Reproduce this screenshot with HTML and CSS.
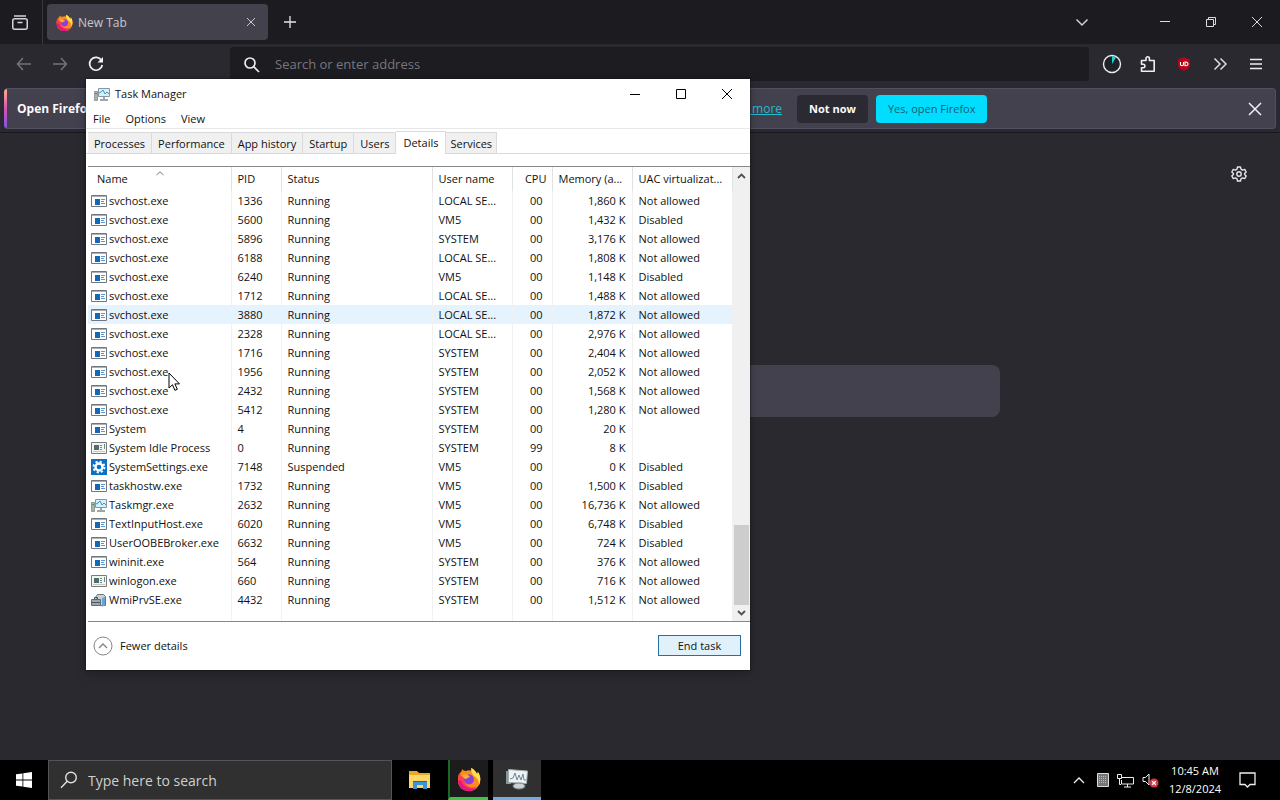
FILE: index.html
```html
<!DOCTYPE html>
<html lang="en">
<head>
<meta charset="utf-8">
<title>Desktop</title>
<link rel="stylesheet" href="styles.css">
</head>
<body>
<svg class="defs" aria-hidden="true">
  <symbol id="fox" viewBox="0 0 24 24">
    <path fill="#ff8a1e" d="M3 6c1-1 2-2 2-4 1 1 2 2 4 2 2-1 4-1 6 0 0-1 0-2-1-3 3 1 5 4 6 6 1-1 1-2 0-3 3 3 4 7 3 11-1 5-5 9-11 9S1 20 1 13c0-3 0-5 2-7z"/>
    <path fill="#ff3b4e" d="M3 6c-2 2-2 4-2 7 0 7 5 11 11 11 4 0 7-2 9-5-3 2-7 2-10 0-4-2-4-6-3-8L4 9z"/>
    <path fill="#e31587" d="M1 14c1 6 5 10 11 10 3 0 5-1 7-3-5 2-13 0-15-8z"/>
    <path fill="#ffe14d" d="M14 1c3 1 5 4 6 6 1-1 1-2 0-3 4 4 4 10 2 14 0-6-3-8-5-9-2-2-3-4-3-8z"/>
    <circle cx="12" cy="12.500" r="5" fill="#8a3fe0"/>
    <path fill="#ffb02e" d="M5 8c2-1 4-1 6 0l2 2c-2 1-3 1-4 2-2 0-3-2-4-4z"/>
  </symbol>
  <symbol id="app" viewBox="0 0 16 14">
    <path fill="#fff" stroke="#707780" d="M.5 1.500h15v11H.5z"/>
    <path fill="#a9b0b8" d="M1 2h14v1H1z"/>
    <path fill="#1468b8" d="M4 5h5v6H4z"/>
    <path stroke="#5797cf" d="M10 5.500h4M10 7.500h3M10 9.500h4"/>
  </symbol>
  <symbol id="sysapp" viewBox="0 0 16 14">
    <path fill="#f2f5f3" stroke="#777d7c" d="M.5 1.500h15v11H.5z"/>
    <path fill="#4f6f68" d="M3 4h5v5H3z"/>
    <path stroke="#6c8a82" d="M9 4.500h2M9 6.500h2M9 8.500h2M13.500 3v5"/>
    <path stroke="#c4cac8" d="M2 10.500h12"/>
  </symbol>
  <symbol id="gearbox" viewBox="0 0 16 16">
    <path fill="#0a72c6" d="M0 0h16v16H0z"/>
    <circle cx="8" cy="8" r="3.500" fill="none" stroke="#fff" stroke-width="2.400"/>
    <circle cx="8" cy="8" r="5.400" fill="none" stroke="#fff" stroke-width="2" stroke-dasharray="2.120 2.120"/>
  </symbol>
  <symbol id="taskmgr" viewBox="0 0 16 16">
    <path fill="#d9eef7" stroke="#8796a0" d="M4.500 2.500h11v8h-11z"/>
    <path fill="none" stroke="#2f9cc4" d="M5 7l2-1 2-2 2 4 2-2 2 2"/>
    <path fill="#9ba6ad" d="M9 11h2v2h3v2H6v-2h3z"/>
    <path fill="#aab4a8" stroke="#7f8d85" stroke-width=".8" d="M.5 5.500h3v9h-3z"/>
    <path stroke="#3c9a77" d="M1 7.500h2"/>
  </symbol>
  <symbol id="wmi" viewBox="0 0 16 16">
    <path fill="#c9d2d9" stroke="#68737c" d="M4.500 5.500l2-3h6l2 2v9h-5z"/>
    <path fill="#9ba7b1" stroke="#616c76" d="M.5 7.500h9v6h-9z"/>
    <path fill="none" stroke="#4b5761" d="M1 10.500h8M3.500 7V5.500h3V7"/>
    <path fill="#6fa3cf" d="M11 6l3-1v8l-3 2z"/>
  </symbol>
</svg>

<div class="desktop">
  <main class="browser">
    <header class="tabstrip">
      <button class="ic view" aria-label="Firefox View"><svg width="18" height="18" viewBox="0 0 18 18" fill="none" stroke="#d5d4dc" stroke-width="1.500"><rect x="1.750" y="5.750" width="14.500" height="10.500" rx="2"/><path d="M3 3h12M6.500 9.500h5"/></svg></button>
      <div class="tab"><svg width="17" height="17"><use href="#fox"/></svg><span>New Tab</span>
        <button class="ic close" aria-label="Close tab"><svg width="10" height="10" viewBox="0 0 10 10" stroke="#c9c8d0"><path d="M1 1l8 8M9 1L1 9"/></svg></button></div>
      <button class="ic plus" aria-label="New tab"><svg width="14" height="14" viewBox="0 0 14 14" stroke="#e6e5ec" stroke-width="1.300"><path d="M7 1v12M1 7h12"/></svg></button>
      <span class="grow"></span>
      <button class="ic alltabs" aria-label="List all tabs"><svg width="14" height="14" viewBox="0 0 14 14" fill="none" stroke="#d0cfd7" stroke-width="1.500"><path d="M1.500 4.500L7 10l5.500-5.500"/></svg></button>
      <button class="ic wc" aria-label="Minimize"><svg width="12" height="12" viewBox="0 0 12 12" stroke="#ddd"><path d="M1 5.500h10"/></svg></button>
      <button class="ic wc" aria-label="Restore"><svg width="12" height="12" viewBox="0 0 12 12" fill="none" stroke="#ddd"><path d="M1.500 3.500h7v7h-7zM3.500 3V1.500h7v7H9"/></svg></button>
      <button class="ic wc" aria-label="Close"><svg width="12" height="12" viewBox="0 0 12 12" stroke="#ddd"><path d="M1 1l10 10M11 1L1 11"/></svg></button>
    </header>
    <nav class="toolbar">
      <div class="navs">
        <button class="ic" aria-label="Back"><svg width="16" height="16" viewBox="0 0 16 16" fill="none" stroke="#74737c" stroke-width="1.500"><path d="M15 8H1.500M7 2L1.500 8 7 14"/></svg></button>
        <button class="ic" aria-label="Forward"><svg width="16" height="16" viewBox="0 0 16 16" fill="none" stroke="#74737c" stroke-width="1.500"><path d="M1 8h13.500M9 2l5.500 6L9 14"/></svg></button>
        <button class="ic" aria-label="Reload"><svg width="16" height="16" viewBox="0 0 16 16" fill="none" stroke="#f3f3f6" stroke-width="1.700"><path d="M13.500 4.500A6.400 6.400 0 1 0 14.300 9"/><path d="M15 1v5.500H9.500z" fill="#f3f3f6" stroke="none"/></svg></button>
      </div>
      <label class="urlbar"><svg width="17" height="17" viewBox="0 0 17 17" fill="none" stroke="#ecebf1" stroke-width="1.700"><circle cx="7" cy="7" r="5"/><path d="M10.700 10.700L16 16"/></svg><input type="text" placeholder="Search or enter address" aria-label="Address"></label>
      <div class="tools">
        <button class="ic" aria-label="Tab timer"><svg width="20" height="20" viewBox="0 0 20 20"><circle cx="10" cy="10" r="8.500" fill="#1d2327" stroke="#eee" stroke-width="1.400"/><path d="M10 10V2a8 8 0 0 1 4 1.500z" fill="#1fd0cf"/></svg></button>
        <button class="ic" aria-label="Extensions"><svg width="18" height="18" viewBox="0 0 18 18" fill="none" stroke="#efeef4" stroke-width="1.600" stroke-linejoin="round"><path d="M2.500 5.500H7V3.500a1.700 1.700 0 0 1 3.400 0v2h4.800v10.700H2.500v-3.500h1.700a1.600 1.600 0 0 0 0-3.400H2.500z"/></svg></button>
        <button class="ic" aria-label="uBlock"><svg width="14" height="14" viewBox="0 0 14 14"><path fill="#b5051c" d="M7 0l6 2.500V8c0 3-3 5-6 6-3-1-6-3-6-6V2.500z"/><path fill="none" stroke="#fff" stroke-width="1.100" d="M3.500 5v2.500q0 1.200 1.500 1.200T6.500 7.500V5M8 5v3.700h1q2 0 2-1.800T9 5z"/></svg></button>
        <button class="ic" aria-label="More tools"><svg width="14" height="14" viewBox="0 0 14 14" fill="none" stroke="#ddd" stroke-width="1.500"><path d="M1.500 1.500L7 7l-5.500 5.500M7.500 1.500L13 7l-5.500 5.500"/></svg></button>
        <button class="ic" aria-label="Menu"><svg width="14" height="14" viewBox="0 0 14 14" stroke="#efeef4" stroke-width="1.500"><path d="M1 2.500h12M1 7h12M1 11.500h12"/></svg></button>
      </div>
    </nav>
    <div class="notice-wrap">
      <section class="notice">
        <strong>Open Firefox</strong>
        <div class="notice-actions"><a href="#">Learn more</a><button class="btn">Not now</button><button class="btn primary">Yes, open Firefox</button></div>
        <button class="ic" aria-label="Dismiss"><svg width="14" height="14" viewBox="0 0 14 14" stroke="#f0eff5" stroke-width="1.500"><path d="M1 1l12 12M13 1L1 13"/></svg></button>
      </section>
    </div>
    <section class="newtab">
      <button class="ic gear" aria-label="Customize"><svg width="16" height="16" viewBox="0 0 16 16" fill="none" stroke="#e6e5ec" stroke-width="1.400" stroke-linejoin="round"><path d="M6.500 1h3l.5 2.200 1.500.9 2.200-.7 1.500 2.600L13.600 7.500v1l1.600 1.500-1.500 2.600-2.200-.7-1.500.9-.5 2.200h-3L6 12.800l-1.500-.9-2.200.7L.8 10l1.600-1.500v-1L.8 6l1.500-2.600 2.200.7L6 3.200z"/><circle cx="8" cy="8" r="2.200"/></svg></button>
      <div class="search"></div>
    </section>
  </main>

  <section class="window">
    <header class="titlebar"><svg width="16" height="16"><use href="#taskmgr"/></svg><span class="grow">Task Manager</span>
      <button class="ic" aria-label="Minimize"><svg width="12" height="12" viewBox="0 0 12 12" stroke="#000"><path d="M1 6.500h10"/></svg></button>
      <button class="ic" aria-label="Maximize"><svg width="12" height="12" viewBox="0 0 12 12" fill="none" stroke="#000"><path d="M1.500 1.500h9v9h-9z"/></svg></button>
      <button class="ic" aria-label="Close"><svg width="12" height="12" viewBox="0 0 12 12" stroke="#000"><path d="M1 1l10 10M11 1L1 11"/></svg></button>
    </header>
    <nav class="menubar"><button>File</button><button>Options</button><button>View</button></nav>
    <div class="tabs"><button>Processes</button><button>Performance</button><button>App history</button><button>Startup</button><button>Users</button><button class="active">Details</button><button>Services</button></div>
    <div class="list">
      <table>
        <colgroup><col class="c-name"><col class="c-pid"><col class="c-status"><col class="c-user"><col class="c-cpu"><col class="c-mem"><col></colgroup>
        <thead><tr><th class="sorted">Name<svg width="8" height="5" viewBox="0 0 8 5" fill="none" stroke="#777"><path d="M.5 4L4 .8 7.500 4"/></svg></th><th>PID</th><th>Status</th><th>User name</th><th>CPU</th><th>Memory (a...</th><th>UAC virtualizat...</th></tr></thead>
        <tbody>
          <tr><td><svg><use href="#app"/></svg>svchost.exe</td><td>1336</td><td>Running</td><td>LOCAL SE...</td><td>00</td><td>1,860 K</td><td>Not allowed</td></tr>
          <tr><td><svg><use href="#app"/></svg>svchost.exe</td><td>5600</td><td>Running</td><td>VM5</td><td>00</td><td>1,432 K</td><td>Disabled</td></tr>
          <tr><td><svg><use href="#app"/></svg>svchost.exe</td><td>5896</td><td>Running</td><td>SYSTEM</td><td>00</td><td>3,176 K</td><td>Not allowed</td></tr>
          <tr><td><svg><use href="#app"/></svg>svchost.exe</td><td>6188</td><td>Running</td><td>LOCAL SE...</td><td>00</td><td>1,808 K</td><td>Not allowed</td></tr>
          <tr><td><svg><use href="#app"/></svg>svchost.exe</td><td>6240</td><td>Running</td><td>VM5</td><td>00</td><td>1,148 K</td><td>Disabled</td></tr>
          <tr><td><svg><use href="#app"/></svg>svchost.exe</td><td>1712</td><td>Running</td><td>LOCAL SE...</td><td>00</td><td>1,488 K</td><td>Not allowed</td></tr>
          <tr class="hover"><td><svg><use href="#app"/></svg>svchost.exe</td><td>3880</td><td>Running</td><td>LOCAL SE...</td><td>00</td><td>1,872 K</td><td>Not allowed</td></tr>
          <tr><td><svg><use href="#app"/></svg>svchost.exe</td><td>2328</td><td>Running</td><td>LOCAL SE...</td><td>00</td><td>2,976 K</td><td>Not allowed</td></tr>
          <tr><td><svg><use href="#app"/></svg>svchost.exe</td><td>1716</td><td>Running</td><td>SYSTEM</td><td>00</td><td>2,404 K</td><td>Not allowed</td></tr>
          <tr><td><svg><use href="#app"/></svg>svchost.exe</td><td>1956</td><td>Running</td><td>SYSTEM</td><td>00</td><td>2,052 K</td><td>Not allowed</td></tr>
          <tr><td><svg><use href="#app"/></svg>svchost.exe</td><td>2432</td><td>Running</td><td>SYSTEM</td><td>00</td><td>1,568 K</td><td>Not allowed</td></tr>
          <tr><td><svg><use href="#app"/></svg>svchost.exe</td><td>5412</td><td>Running</td><td>SYSTEM</td><td>00</td><td>1,280 K</td><td>Not allowed</td></tr>
          <tr><td><svg><use href="#app"/></svg>System</td><td>4</td><td>Running</td><td>SYSTEM</td><td>00</td><td>20 K</td><td></td></tr>
          <tr><td><svg><use href="#sysapp"/></svg>System Idle Process</td><td>0</td><td>Running</td><td>SYSTEM</td><td>99</td><td>8 K</td><td></td></tr>
          <tr><td><svg><use href="#gearbox"/></svg>SystemSettings.exe</td><td>7148</td><td>Suspended</td><td>VM5</td><td>00</td><td>0 K</td><td>Disabled</td></tr>
          <tr><td><svg><use href="#app"/></svg>taskhostw.exe</td><td>1732</td><td>Running</td><td>VM5</td><td>00</td><td>1,500 K</td><td>Disabled</td></tr>
          <tr><td><svg><use href="#taskmgr"/></svg>Taskmgr.exe</td><td>2632</td><td>Running</td><td>VM5</td><td>00</td><td>16,736 K</td><td>Not allowed</td></tr>
          <tr><td><svg><use href="#app"/></svg>TextInputHost.exe</td><td>6020</td><td>Running</td><td>VM5</td><td>00</td><td>6,748 K</td><td>Disabled</td></tr>
          <tr><td><svg><use href="#app"/></svg>UserOOBEBroker.exe</td><td>6632</td><td>Running</td><td>VM5</td><td>00</td><td>724 K</td><td>Disabled</td></tr>
          <tr><td><svg><use href="#app"/></svg>wininit.exe</td><td>564</td><td>Running</td><td>SYSTEM</td><td>00</td><td>376 K</td><td>Not allowed</td></tr>
          <tr><td><svg><use href="#sysapp"/></svg>winlogon.exe</td><td>660</td><td>Running</td><td>SYSTEM</td><td>00</td><td>716 K</td><td>Not allowed</td></tr>
          <tr><td><svg><use href="#wmi"/></svg>WmiPrvSE.exe</td><td>4432</td><td>Running</td><td>SYSTEM</td><td>00</td><td>1,512 K</td><td>Not allowed</td></tr>
          <tr class="filler"><td></td><td></td><td></td><td></td><td></td><td></td><td></td></tr>
        </tbody>
      </table>
      <div class="scroll">
        <svg width="9" height="6" viewBox="0 0 9 6" fill="none" stroke="#505050" stroke-width="1.800"><path d="M1 5l3.500-3.500L8 5"/></svg>
        <div class="thumb"></div>
        <svg width="9" height="6" viewBox="0 0 9 6" fill="none" stroke="#505050" stroke-width="1.800"><path d="M1 1l3.500 3.500L8 1"/></svg>
      </div>
    </div>
    <footer class="foot">
      <button class="fewer"><svg width="20" height="20" viewBox="0 0 20 20" fill="none" stroke="#858585"><circle cx="10" cy="10" r="9"/><path stroke-width="1.400" d="M6 12l4-4 4 4"/></svg>Fewer details</button>
      <button class="end">End task</button>
    </footer>
  </section>

  <svg class="cursor" width="13" height="20" viewBox="0 0 13 20"><path fill="#fff" stroke="#000" d="M1 1v15l3.500-3.300 2.400 5.600 2.400-1-2.400-5.400h4.600z"/></svg>

  <footer class="taskbar">
    <button class="tb start" aria-label="Start"><svg width="16" height="16" viewBox="0 0 16 16" fill="#fff"><path d="M0 2.300L6.500 1.400v6.200H0zM7.300 1.300L16 0v7.600H7.300zM0 8.400h6.500v6.200L0 13.700zM7.300 8.400H16V16l-8.700-1.300z"/></svg></button>
    <label class="tbsearch"><svg width="18" height="18" viewBox="0 0 18 18" fill="none" stroke="#e0e0e0" stroke-width="1.400"><circle cx="11" cy="6.500" r="5.300"/><path d="M7.200 10.300L1 16.800"/></svg><input type="text" placeholder="Type here to search" aria-label="Search"></label>
    <button class="tb explorer" aria-label="File Explorer"><svg width="24" height="20" viewBox="0 0 24 20"><path fill="#e9a825" d="M1 1h8l2 2h11v5H1z"/><path fill="#ffd766" d="M1 5h21v13H1z"/><path fill="#3d93d3" d="M5 11h14v8h-4v-4H9v4H5z"/><path fill="#1f6aa8" d="M5 11h14v1H5z"/></svg></button>
    <button class="tb firefox" aria-label="Firefox"><svg width="24" height="24"><use href="#fox"/></svg></button>
    <button class="tb manager" aria-label="Task Manager"><svg width="24" height="22" viewBox="0 0 24 22"><path fill="#8b969c" d="M1 3h5v13H1z"/><path fill="#eef2f3" stroke="#a2abb0" d="M3.500 1.500L22.500 3l-1 12.500-18-1z"/><path fill="none" stroke="#688899" d="M5 11l3-1 2-5 2 7 2-5 2 5 2-6 1 6h2"/><ellipse cx="14" cy="18" rx="6" ry="3" fill="#cbd2d5" stroke="#79858b"/></svg></button>
    <span class="grow"></span>
    <div class="tray">
      <svg width="12" height="8" viewBox="0 0 12 8" fill="none" stroke="#eee" stroke-width="1.300"><path d="M1 7l5-5 5 5"/></svg>
      <svg width="12" height="14" viewBox="0 0 12 14"><path fill="#73777a" stroke="#ddd" d="M.5.5h11v13H.5z"/><path stroke="#b8bcbe" stroke-dasharray="1 1" d="M2 3.500h8M2 5.500h8M2 7.500h8M2 9.500h8"/></svg>
      <svg width="17" height="15" viewBox="0 0 17 15" fill="none" stroke="#eee"><path d="M5 4.500h11.500v6.500H4.500V7M10.500 11v3M7 14h7M.5 1.500h4v4h-4zM2.500 5.500v6H4"/></svg>
      <svg width="17" height="16" viewBox="0 0 17 16"><path fill="none" stroke="#eee" d="M1 5.500h2.500L7 2v11L3.500 9.500H1z"/><circle cx="12" cy="11" r="4.500" fill="#d9364a"/><path stroke="#fff" stroke-width="1.300" d="M10.200 9.200l3.600 3.600M13.800 9.200l-3.600 3.600"/></svg>
    </div>
    <div class="clock"><span>10:45 AM</span><span>12/8/2024</span></div>
    <button class="tb action" aria-label="Notifications"><svg width="17" height="17" viewBox="0 0 17 17" fill="none" stroke="#eee" stroke-width="1.300"><path d="M1 1h15v11.500h-5L8.500 15 6 12.500H1z"/></svg></button>
  </footer>
</div>
</body>
</html>
```
FILE: styles.css
```css
* { box-sizing: border-box; }
body { margin: 0; font-family: "Open Sans", "Noto Sans", sans-serif; font-size: 11px; }
button, input { font: inherit; color: inherit; border: 0; padding: 0; margin: 0; background: none; }
svg { display: block; flex: none; }
.defs { position: absolute; width: 0; height: 0; }
.grow { flex: 1; }
.ic { display: flex; align-items: center; justify-content: center; flex: none; }

.desktop { position: relative; display: flex; flex-direction: column; min-height: 100vh; background: #2a2930; overflow: hidden; }
.browser { flex: 1; display: flex; flex-direction: column; color: #fbfbfe; }

.tabstrip { display: flex; align-items: stretch; height: 44px; background: #1c1b20; }
.view { width: 43px; border-right: 1px solid #39383f; padding-right: 2px; }
.tab { display: flex; align-items: center; gap: 5px; width: 221px; margin: 4px 0 4px 4px; padding: 0 12px 0 9px; border-radius: 4px; background: #43424c; color: #c8c7cf; font-size: 12px; }
.tab .close { width: 10px; margin-left: auto; }
.plus { width: 44px; }
.alltabs { width: 46px; margin-right: 37px; }
.wc { width: 46px; }

.toolbar { display: flex; align-items: center; height: 40px; padding-right: 6px; background: #2a2930; }
.navs { display: flex; width: 230px; padding-left: 6px; }
.navs .ic, .tools .ic { width: 36px; height: 36px; }
.urlbar { flex: 1; display: flex; align-items: center; gap: 15px; height: 34px; padding-left: 13px; border-radius: 3px; background: #1d1c21; }
.urlbar input { flex: 1; font-size: 13px; outline: 0; }
.urlbar input::placeholder { color: #77767f; opacity: 1; }
.tools { display: flex; margin-left: 5px; }

.notice-wrap { padding: 4px 4px 3px; background: #2a2833; border-bottom: 1px solid #18171c; }
.notice { display: flex; align-items: center; height: 41px; padding: 0 13px; border: 1px solid #52515d; border-left: 0; border-radius: 4px; background: linear-gradient(#ffb08a, #d356b2, #8551e8) left / 3px 100% no-repeat #42414d; font-size: 12px; }
.notice strong { width: 400px; }
.notice-actions { flex: 1; display: flex; align-items: center; gap: 8px; padding-left: 300px; }
.notice a { margin-right: 7px; color: #25b9d2; }
.btn { height: 28px; padding: 0 12px; border-radius: 4px; background: #2b2a33; font-size: 11px; font-weight: 700; }
.btn.primary { background: #00ddff; color: #155b70; font-weight: 400; }
.newtab { flex: 1; display: flex; flex-direction: column; padding: 31px 31px 0; }
.gear { align-self: flex-end; width: 20px; height: 20px; }
.search { align-self: center; width: 720px; height: 52px; margin-top: 181px; border-radius: 8px; background: #42414d; }

.window { position: absolute; left: 86px; top: 79px; width: 664px; display: flex; flex-direction: column; background: #fff; color: #111; box-shadow: 0 0 2px #111, 0 3px 10px #00000040; }
.titlebar { display: flex; align-items: center; gap: 5px; height: 29px; padding-left: 8px; }
.titlebar .ic { width: 46px; height: 29px; margin-left: -5px; }
.menubar { display: flex; gap: 15px; height: 21px; padding: 0 7px; border-bottom: 1px solid #e8e8e8; }
.tabs { display: flex; align-items: flex-end; height: 25px; padding: 2px 0 0 2px; border-bottom: 1px solid #dadada; }
.tabs button { height: 21px; padding: 0 6px; border: 1px solid #dadada; border-width: 1px 1px 0 0; background: #f0f0f0; }
.tabs button:last-child { padding: 0 4px; }
.tabs .active { height: 23px; padding: 0 7px 2px; margin-bottom: -1px; background: #fff; }
.list { display: flex; margin: 12px 0 0 2px; border-top: 1px solid #888; border-bottom: 1px solid #888; }
table { flex: 1; width: 0; border-collapse: collapse; table-layout: fixed; }
.c-name { width: 143px; }
.c-pid { width: 50px; }
.c-status { width: 151px; }
.c-user { width: 80px; }
.c-cpu { width: 40px; }
.c-mem { width: 80px; }
th, td { height: 19px; padding: 0 6px; border-right: 1px solid #f1f1f1; text-align: left; font-weight: 400; white-space: nowrap; line-height: 18px; }
th { height: 24px; border-color: #e2e2e2; }
th:first-child { padding-left: 9px; }
th svg { float: right; margin: 1px 61px 0 0; }
td:first-child { padding-left: 3px; }
td svg { float: left; width: 16px; height: 16px; margin: 1px 2px 0 0; }
td:nth-child(5), td:nth-child(6), th:nth-child(5) { text-align: right; }
td:nth-child(5) { padding-right: 9px; }
th:nth-child(5) { padding-right: 5px; }
.hover { background: #e5f3ff; }
.filler td { height: 12px; }
.scroll { display: flex; flex-direction: column; align-items: center; justify-content: space-between; width: 17px; padding: 6px 0 5px; background: #f0f0f0; }
.thumb { width: 15px; height: 80px; margin: auto 0 5px; background: #cdcdcd; }
.foot { display: flex; align-items: center; justify-content: space-between; height: 48px; padding: 0 9px 1px 7px; }
.fewer { display: flex; align-items: center; gap: 7px; }
.end { width: 83px; height: 21px; border: 1px solid #2b6f9e; background: #e1f1fb; }
.cursor { position: absolute; left: 168px; top: 372px; }

.taskbar { display: flex; height: 40px; background: #000; color: #fff; }
.tb { display: flex; align-items: center; justify-content: center; width: 48px; }
.tbsearch { display: flex; align-items: center; gap: 10px; width: 344px; padding-left: 11px; border: 1px solid #555; background: #303030; }
.tbsearch input { flex: 1; font-size: 14px; outline: 0; }
.tbsearch input::placeholder { color: #cfcfcf; opacity: 1; }
.explorer { width: 56px; }
.firefox { width: 40px; border-left: 2px solid #176b20; border-bottom: 3px solid #3cc743; background: #1c1c1c; }
.manager { margin-left: 5px; border-bottom: 3px solid #76a9dc; background: #303030; }
.tray { display: flex; align-items: center; gap: 8px; }
.tray svg:first-child { margin-right: 4px; }
.clock { display: flex; flex-direction: column; align-items: center; justify-content: center; width: 72px; line-height: 18px; }
.action { width: 32px; margin-right: 17px; }
```
